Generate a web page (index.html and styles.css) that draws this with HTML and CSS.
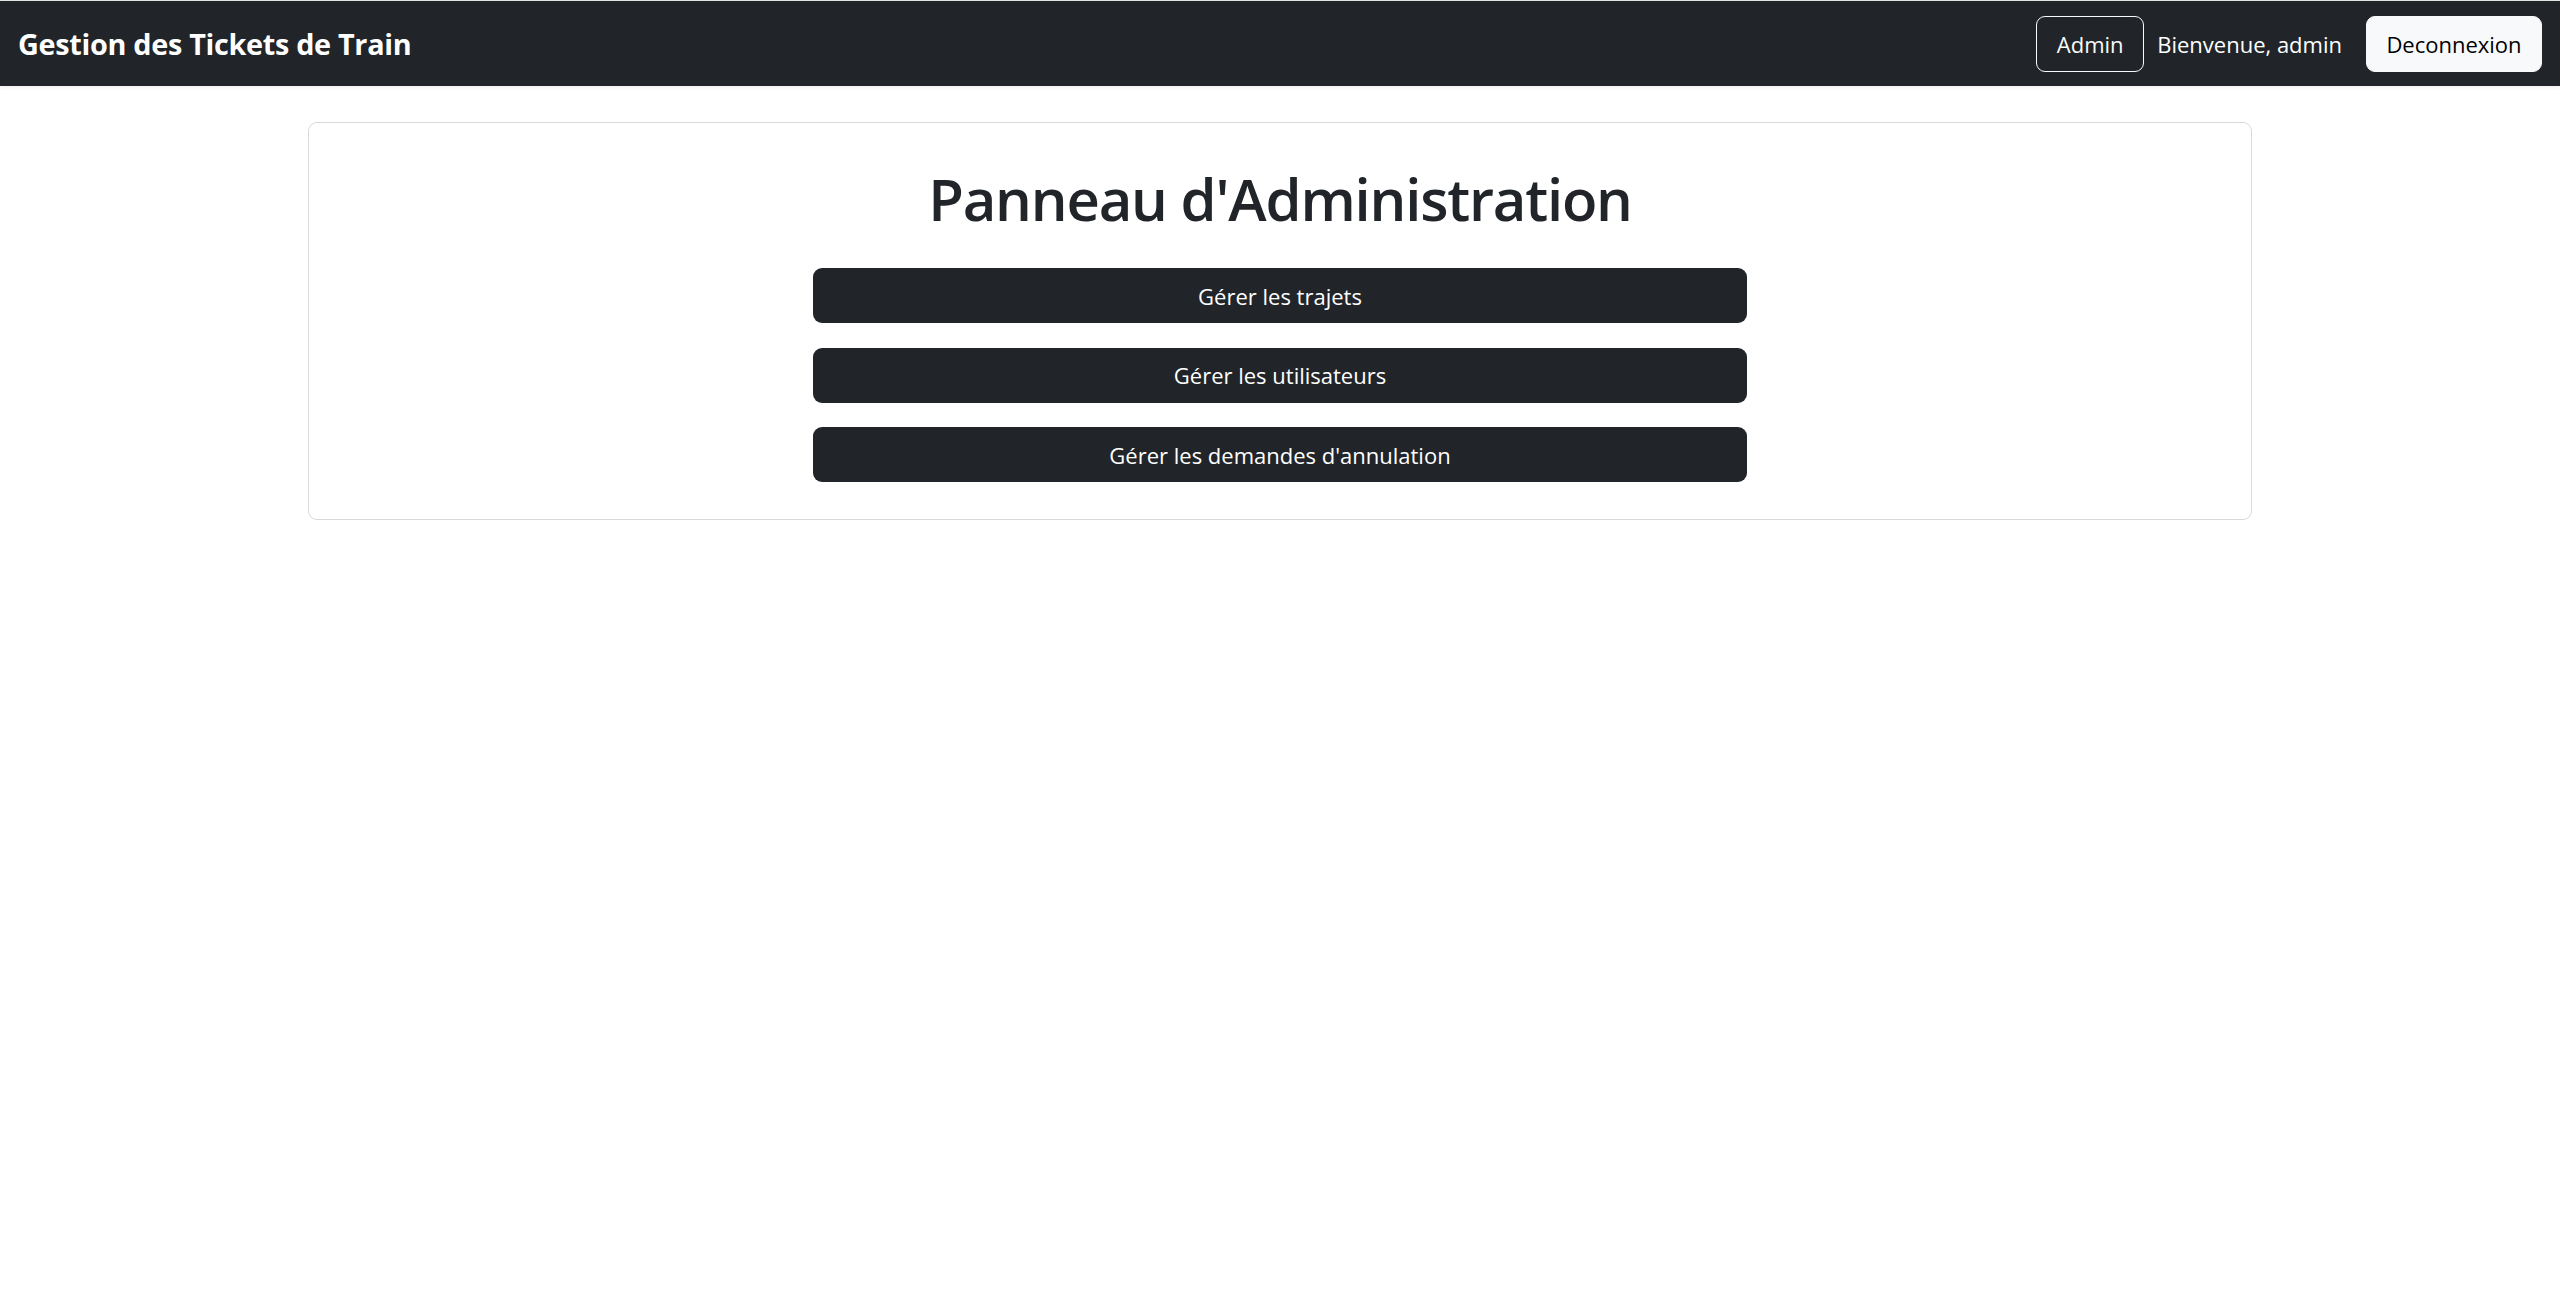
FILE: index.html
```html
<!DOCTYPE html>
<html lang="fr">
<head>
<meta charset="utf-8">
<title>Panneau d'Administration</title>
<link rel="stylesheet" href="styles.css">
</head>
<body>
<nav class="navbar">
  <a class="brand" href="#">Gestion des Tickets de Train</a>
  <div class="nav-right">
    <a class="btn btn-outline" href="#">Admin</a>
    <span class="welcome">Bienvenue, admin</span>
    <a class="btn btn-light" href="#">Deconnexion</a>
  </div>
</nav>
<main class="container">
  <section class="card">
    <h1 class="title">Panneau d'Administration</h1>
    <div class="actions">
      <a class="btn btn-dark" href="#">Gérer les trajets</a>
      <a class="btn btn-dark" href="#">Gérer les utilisateurs</a>
      <a class="btn btn-dark" href="#">Gérer les demandes d'annulation</a>
    </div>
  </section>
</main>
</body>
</html>
```
FILE: styles.css
```css
* { box-sizing: border-box; }
html, body { margin: 0; padding: 0; }
body {
  font-family: "Open Sans", "Noto Sans", sans-serif;
  color: #212529;
  background: #fff;
  border-top: 1px solid #e3e3e3;
}
a { text-decoration: none; }

.navbar {
  height: 85px;
  background: #212529;
  display: flex;
  align-items: center;
  justify-content: space-between;
  padding: 0 18px;
  box-shadow: 0 2px 4px rgba(0,0,0,0.06);
}
.brand {
  color: #fff;
  font-weight: 700;
  font-size: 28.8px;
  letter-spacing: -0.3px;
}
.nav-right {
  display: flex;
  align-items: center;
}
.btn {
  display: inline-flex;
  align-items: center;
  justify-content: center;
  height: 56px;
  border-radius: 9px;
  font-size: 22px;
  border: 1.5px solid transparent;
}
.btn-outline {
  width: 108px;
  color: #f8f9fa;
  border-color: #f8f9fa;
}
.welcome {
  color: #fff;
  font-size: 22px;
  margin: 0 24px 0 13px;
}
.btn-light {
  width: 176px;
  background: #f8f9fa;
  border-color: #f8f9fa;
  color: #000;
}

.container {
  width: 1944px;
  margin: 36px auto 0;
}
.card {
  border: 1.5px solid rgba(0,0,0,0.15);
  border-radius: 9px;
  padding: 32px 24px 37px;
  display: flex;
  flex-direction: column;
  align-items: center;
}
.title {
  margin: 8px 0 33px;
  font-size: 58px;
  font-weight: 600;
  line-height: 72px;
  letter-spacing: -1.2px;
}
.actions {
  width: 934px;
  display: flex;
  flex-direction: column;
  gap: 24.5px;
}
.btn-dark {
  width: 100%;
  background: #212529;
  color: #fff;
  height: 55px;
}
```
